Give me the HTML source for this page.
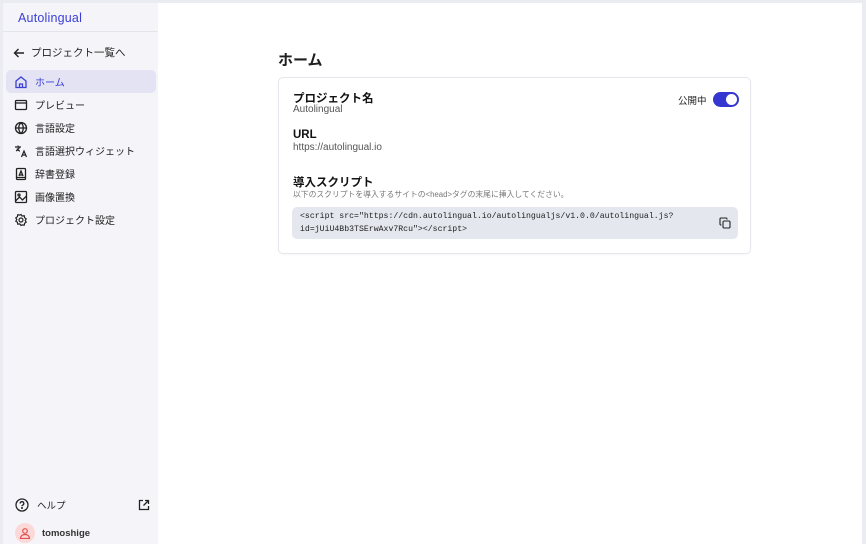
<!DOCTYPE html>
<html><head><meta charset="utf-8"><style>
*{margin:0;padding:0;box-sizing:border-box}
body{width:866px;height:544px;background:#ebebf2;font-family:"Liberation Sans","Noto Sans CJK JP",sans-serif;color:#1f1f1f;position:relative;overflow:hidden}
.side{position:absolute;left:3px;top:3px;width:155px;height:541px;background:#f4f4f9}
.main{position:absolute;left:158px;top:3px;width:704px;height:541px;background:#fff}
.logo{position:absolute;left:15px;top:8px;color:#3b3fd6;font-size:12.5px;letter-spacing:.2px}
.hr{position:absolute;left:0;top:28px;width:155px;height:1px;background:#e4e4ec}
.back{position:absolute;left:10px;top:42px;font-size:10.5px;display:flex;align-items:center;gap:6px}
.nav{position:absolute;left:3px;top:67px;width:150px}
.item{height:23px;display:flex;align-items:center;font-size:10px;padding-left:8px;gap:7px;color:#222}
.item.act{background:#e3e3f4;border-radius:5px;color:#3b3fd6}
.item svg{width:14px;height:14px;flex:none}
.foot1{position:absolute;left:12px;top:495px;width:135px;display:flex;align-items:center;font-size:9.5px;gap:8px}
.foot2{position:absolute;left:12px;top:520px;display:flex;align-items:center;font-size:9.5px;gap:7px;font-weight:bold;color:#333}
.av{width:20px;height:20px;border-radius:50%;background:#fcd9d9;display:flex;align-items:center;justify-content:center}
h1{position:absolute;left:120px;top:46px;font-size:15px;font-weight:bold}
.card{position:absolute;left:120px;top:74px;width:473px;height:177px;border:1px solid #e6e6ec;border-radius:5px;box-shadow:0 1px 2px rgba(0,0,0,.04)}
.lbl{position:absolute;left:14px;font-size:11.5px;font-weight:bold;color:#111}
.val{position:absolute;left:14px;font-size:10px;color:#555}
.code{position:absolute;left:13px;top:129px;width:446px;height:32px;background:#e4e7ee;border-radius:5px;font-family:"Liberation Mono",monospace;font-size:8.2px;color:#222;padding:4px 8px;line-height:12.5px}
.tog{position:absolute;left:434px;top:14px;width:26px;height:15px;border-radius:8px;background:#3436cf}
.tog::after{content:"";position:absolute;right:2px;top:2px;width:11px;height:11px;border-radius:50%;background:#fff}
</style></head><body>
<div class="side">
<div class="logo">Autolingual</div><div class="hr"></div>
<div class="back"><svg width="12" height="12" viewBox="0 0 12 12" fill="none" stroke="#222" stroke-width="1.4"><path d="M11 6H1.5M5.5 2L1.5 6l4 4"/></svg>プロジェクト一覧へ</div>
<div class="nav">
<div class="item act"><svg viewBox="0 0 14 14" fill="none" stroke="#3b3fd6" stroke-width="1.3"><path d="M2 6L7 2l5 4v6.5H2z"/><path d="M5.5 12.5V9h3v3.5"/></svg>ホーム</div>
<div class="item"><svg viewBox="0 0 14 14" fill="none" stroke="#222" stroke-width="1.3"><rect x="1.5" y="2.5" width="11" height="9" rx="1"/><path d="M1.5 5h11"/></svg>プレビュー</div>
<div class="item"><svg viewBox="0 0 14 14" fill="none" stroke="#222" stroke-width="1.3"><circle cx="7" cy="7" r="5.5"/><path d="M1.5 7h11M7 1.5c-3 3-3 8 0 11M7 1.5c3 3 3 8 0 11"/></svg>言語設定</div>
<div class="item"><svg viewBox="0 0 14 14" fill="none" stroke="#222" stroke-width="1.2"><path d="M1 3h6M4 1.5V3M2 7c2-1 3-2.5 3.5-4M3 4.5c.5 1.5 2 2.5 3 2.5M7.5 13l2.5-6 2.5 6M8.3 11h3.4"/></svg>言語選択ウィジェット</div>
<div class="item"><svg viewBox="0 0 14 14" fill="none" stroke="#222" stroke-width="1.3"><rect x="2.5" y="1.5" width="9" height="11" rx="1"/><path d="M5 9l2-5 2 5M5.5 8h3M2.5 10.5h9"/></svg>辞書登録</div>
<div class="item"><svg viewBox="0 0 14 14" fill="none" stroke="#222" stroke-width="1.3"><rect x="1.5" y="1.5" width="11" height="11" rx="1"/><circle cx="5" cy="5" r="1"/><path d="M1.5 11l4-4 3 3 4-4"/></svg>画像置換</div>
<div class="item"><svg viewBox="0 0 14 14" fill="none" stroke="#222" stroke-width="1.2"><circle cx="7" cy="7" r="2"/><path d="M7 1.5l1.2 1.6 2-.4.4 2 1.6 1.2-1 1.6 1 1.7-1.6 1-.4 2-2-.3L7 12.5l-1.2-1.6-2 .3-.4-2-1.6-1 1-1.7-1-1.6 1.6-1.2.4-2 2 .4z"/></svg>プロジェクト設定</div>
</div>
<div class="foot1"><svg width="14" height="14" viewBox="0 0 14 14" fill="none" stroke="#222" stroke-width="1.3"><circle cx="7" cy="7" r="6"/><path d="M5.2 5.5a1.8 1.8 0 1 1 2.3 1.7c-.4.2-.5.5-.5 1"/><circle cx="7" cy="10" r=".4" fill="#222"/></svg><span style="flex:1">ヘルプ</span><svg width="12" height="12" viewBox="0 0 12 12" fill="none" stroke="#222" stroke-width="1.3"><path d="M5 1.5H1.5v9h9V7M7 1.5h3.5V5M10.5 1.5L5.5 6.5"/></svg></div>
<div class="foot2"><div class="av"><svg width="12" height="12" viewBox="0 0 12 12" fill="none" stroke="#e0524f" stroke-width="1.2"><circle cx="6" cy="4" r="2.3"/><path d="M1.5 11.5c0-2.5 2-4 4.5-4s4.5 1.5 4.5 4z"/></svg></div>tomoshige</div>
</div>
<div class="main">
<h1>ホーム</h1>
<div class="card">
<div class="lbl" style="top:12px">プロジェクト名</div>
<div class="val" style="top:26px">Autolingual</div>
<div style="position:absolute;left:399px;top:15px;font-size:9.5px">公開中</div>
<div class="tog"></div>
<div class="lbl" style="top:51px">URL</div>
<div class="val" style="top:64px">https://autolingual.io</div>
<div class="lbl" style="top:96px">導入スクリプト</div>
<div class="val" style="top:111px;font-size:7.8px;color:#777">以下のスクリプトを導入するサイトの&lt;head&gt;タグの末尾に挿入してください。</div>
<div class="code">&lt;script src="https://cdn.autolingual.io/autolingualjs/v1.0.0/autolingual.js?<br>id=jUiU4Bb3TSErwAxv7Rcu"&gt;&lt;/script&gt;
<svg style="position:absolute;right:7px;top:10px" width="12" height="12" viewBox="0 0 12 12" fill="none" stroke="#222" stroke-width="1.1"><rect x="4" y="4" width="7" height="7" rx="1.2"/><path d="M8 2.5V2a1 1 0 0 0-1-1H2a1 1 0 0 0-1 1v5a1 1 0 0 0 1 1h.5"/></svg></div>
</div>
</div>
</body></html>
